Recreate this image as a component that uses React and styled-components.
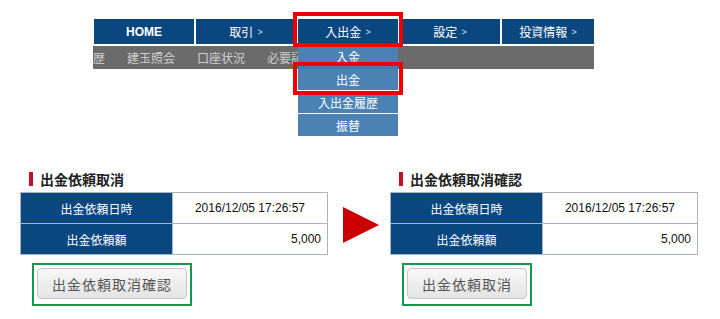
import React from "react";
import styled, {createGlobalStyle} from "styled-components";

const GlobalStyle = createGlobalStyle`
  body {
    margin: 0;
    background: #fff;
    font-family: "Liberation Sans", "Noto Sans CJK JP", sans-serif;
  }
`;

const Page = styled.div`
  position: relative;
  width: 720px;
  height: 319px;
  overflow: hidden;
`;

const Top = styled.div`
  padding: 19px 0 0 93px;
`;

const Nav = styled.div`
  display: flex;
  gap: 2px;
  margin-left: 1px;
`;

const Tab = styled.div`
  position: relative;
  width: ${props => props.width || 100}px;
  height: 25px;
  background: #0b477f;
  color: #fff;
  font-size: 12px;
  font-weight: ${props => (props.bold ? "bold" : "normal")};
  display: flex;
  align-items: center;
  justify-content: center;
  gap: 4px;
`;

const Caret = styled.span`
  font-size: 9px;
  color: #dde6f0;
`;

const SubBar = styled.div`
  margin-top: 2px;
  width: 501px;
  height: 23px;
  background: #6b6b6b;
  overflow: hidden;
  display: flex;
  align-items: center;
`;

const SubList = styled.div`
  display: flex;
  gap: 22px;
  color: #cfcfcf;
  font-size: 12px;
  white-space: nowrap;
`;

const Dropdown = styled.div`
  position: absolute;
  top: calc(100% + 1px);
  left: 0;
  width: 100px;
  display: flex;
  flex-direction: column;
  gap: 1px;
  z-index: 2;
`;

const DropItem = styled.div`
  position: relative;
  height: 22px;
  background: #4a82b4;
  color: #fff;
  font-size: 12px;
  display: flex;
  align-items: center;
  justify-content: center;
`;

const Mark = styled.div`
  position: absolute;
  left: -5px;
  top: ${props => props.top}px;
  width: 110px;
  height: ${props => props.h}px;
  box-sizing: border-box;
  border: 4px solid #ee0000;
  z-index: 3;
`;

const Bottom = styled.div`
  display: flex;
  padding: 0 0 0 20px;
  margin-top: 101px;
`;

const Panel = styled.div`
  width: 308px;
`;

const Heading = styled.div`
  display: flex;
  align-items: center;
  height: 18px;
  padding-left: 9px;
  gap: 7px;
  font-size: 14px;
  font-weight: bold;
  color: #222;
`;

const HeadMark = styled.span`
  width: 4px;
  height: 14px;
  background: #c0102a;
`;

const Table = styled.table`
  margin-top: 4px;
  width: 308px;
  border-collapse: collapse;
  border: 1px solid #a9b5c3;
  font-size: 12px;
`;

const Th = styled.th`
  width: 151px;
  height: 30px;
  padding: 0;
  background: #0b477f;
  color: #fff;
  font-weight: normal;
  border: 1px solid #a9b5c3;
`;

const Td = styled.td`
  height: 30px;
  padding: 0 6px;
  text-align: ${props => props.align || "center"};
  color: #111;
  border: 1px solid #a9b5c3;
`;

const Frame = styled.div`
  display: inline-block;
  margin: 8px 0 0 12px;
  padding: 3px 3px 5px;
  border: 2px solid #119a48;
`;

const Button = styled.div`
  height: 29px;
  padding: 0 14px;
  display: flex;
  align-items: center;
  border: 1px solid #c9c9c9;
  border-radius: 4px;
  background: linear-gradient(#f8f8f8, #e4e4e4);
  color: #555;
  font-size: 14px;
  letter-spacing: 1px;
`;

const Arrow = styled.div`
  margin: 37px 11px 0 15px;
  width: 36px;
  height: 36px;
`;

function ResultPanel({title, date, amount, button}) {
    return (
        <Panel>
            <Heading>
                <HeadMark/>
                {title}
            </Heading>
            <Table>
                <tbody>
                <tr>
                    <Th>出金依頼日時</Th>
                    <Td>{date}</Td>
                </tr>
                <tr>
                    <Th>出金依頼額</Th>
                    <Td align="right">{amount}</Td>
                </tr>
                </tbody>
            </Table>
            <Frame>
                <Button>{button}</Button>
            </Frame>
        </Panel>
    );
}

export default function App() {
    return (
        <Page>
            <GlobalStyle/>
            <Top>
                <Nav>
                    <Tab bold>HOME</Tab>
                    <Tab>取引<Caret>&gt;</Caret></Tab>
                    <Tab>
                        入出金<Caret>&gt;</Caret>
                        <Mark top={-7} h={35}/>
                        <Dropdown>
                            <DropItem>入金</DropItem>
                            <DropItem>
                                出金
                                <Mark top={-6} h={33}/>
                            </DropItem>
                            <DropItem>入出金履歴</DropItem>
                            <DropItem>振替</DropItem>
                        </Dropdown>
                    </Tab>
                    <Tab>設定<Caret>&gt;</Caret></Tab>
                    <Tab width={92}>投資情報<Caret>&gt;</Caret></Tab>
                </Nav>
                <SubBar>
                    <SubList>
                        <span>歴</span>
                        <span>建玉照会</span>
                        <span>口座状況</span>
                        <span>必要証拠金</span>
                    </SubList>
                </SubBar>
            </Top>
            <Bottom>
                <ResultPanel title="出金依頼取消" date="2016/12/05 17:26:57" amount="5,000"
                             button="出金依頼取消確認"/>
                <Arrow>
                    <svg width="36" height="36" viewBox="0 0 36 36">
                        <polygon points="0,0 36,18 0,36" fill="#cc0000"/>
                    </svg>
                </Arrow>
                <ResultPanel title="出金依頼取消確認" date="2016/12/05 17:26:57" amount="5,000"
                             button="出金依頼取消"/>
            </Bottom>
        </Page>
    );
}
